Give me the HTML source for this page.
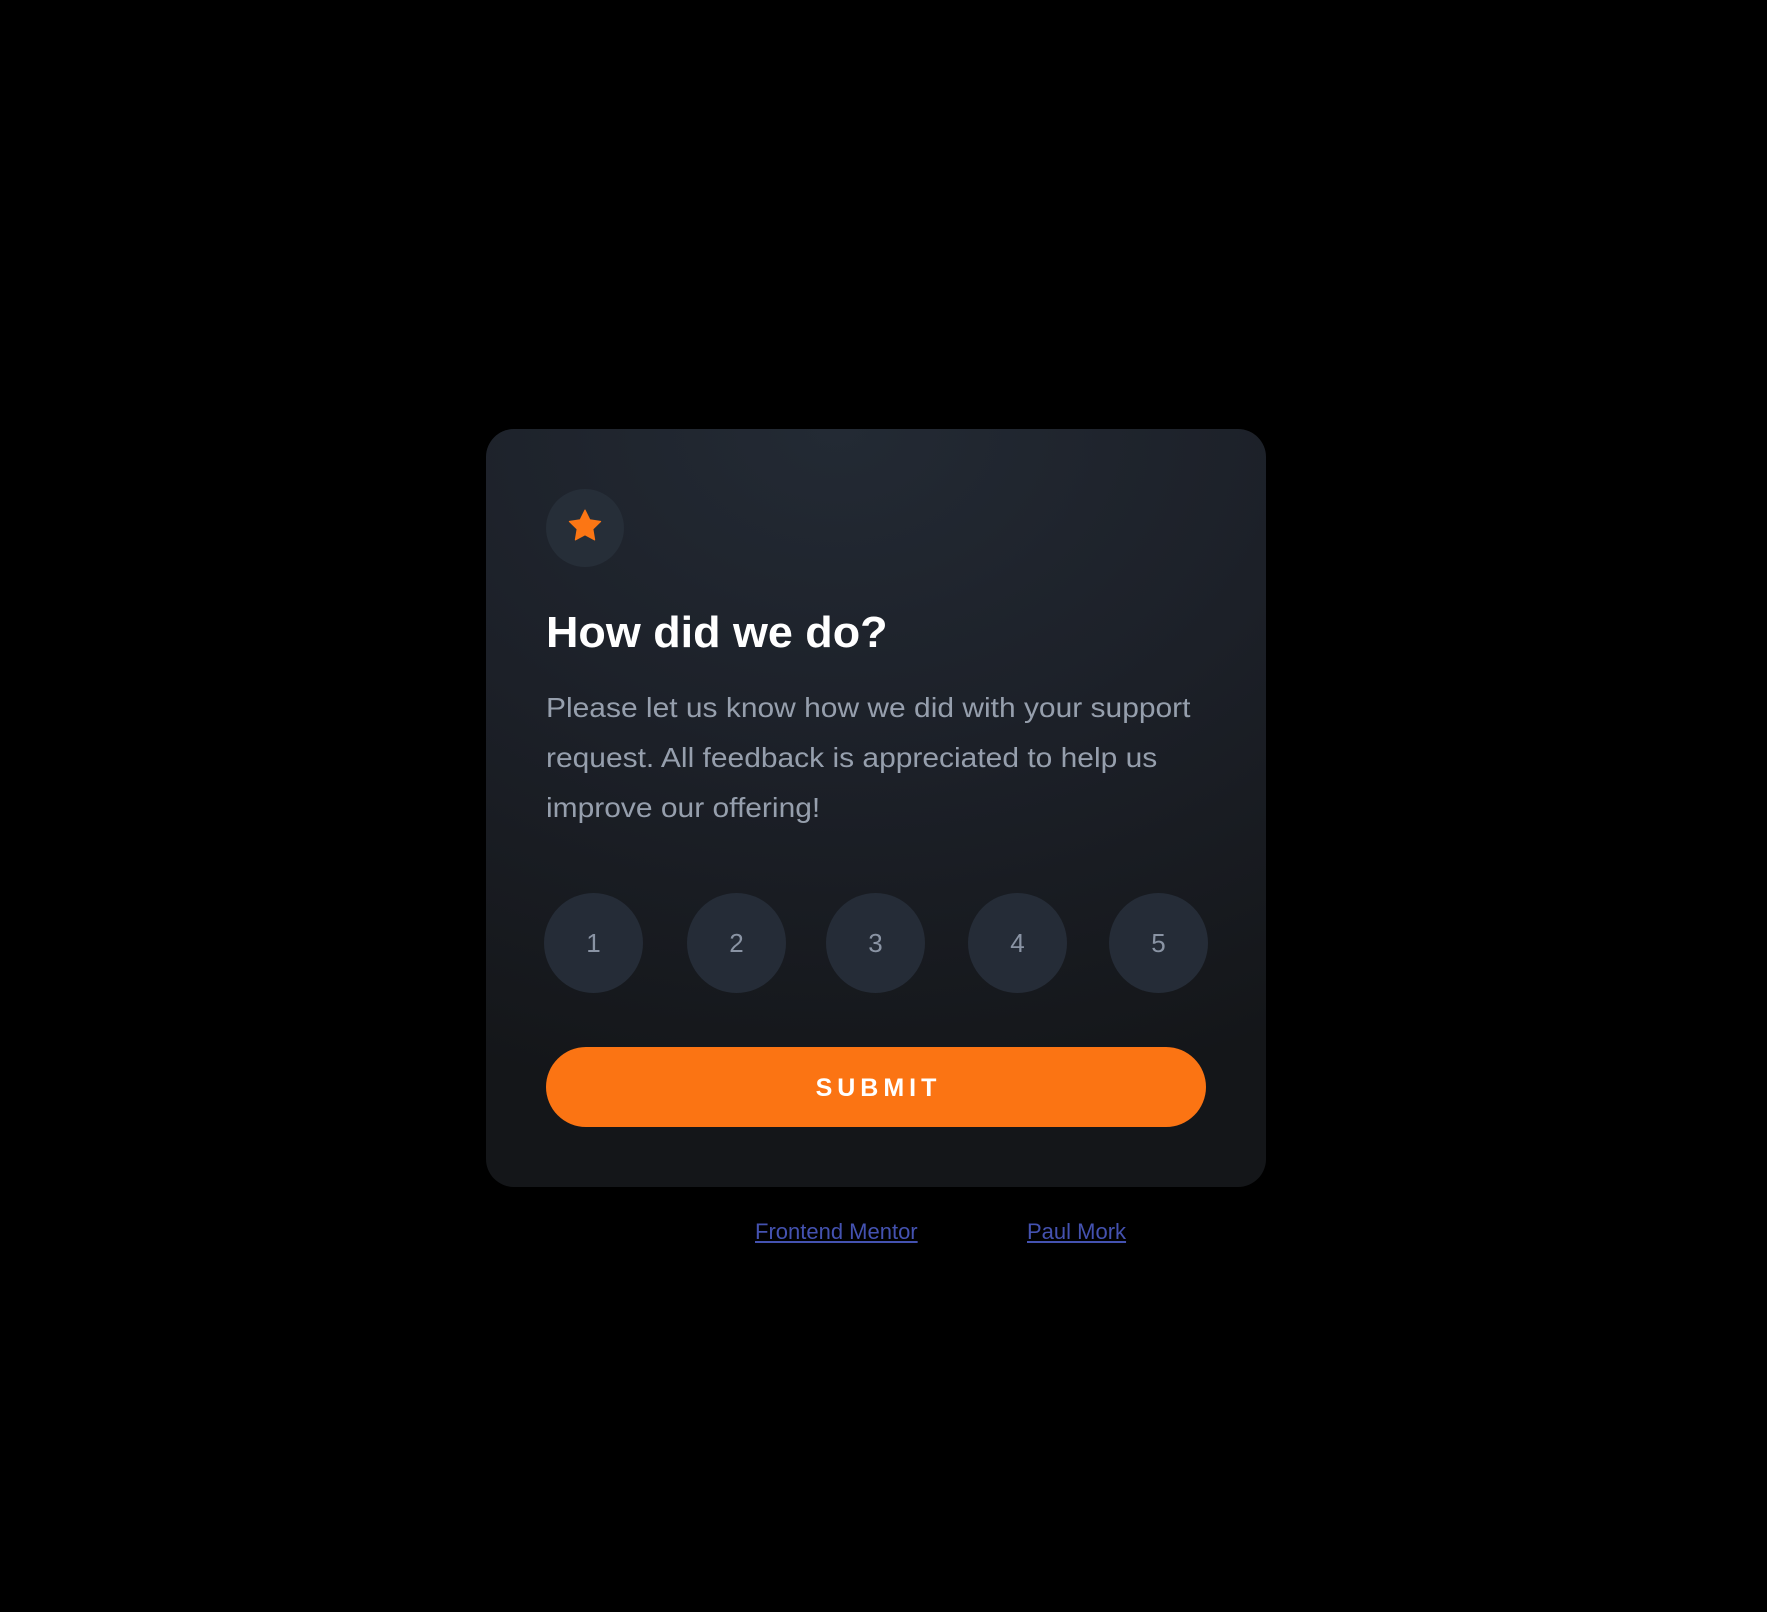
<!DOCTYPE html>
<html><head><meta charset="utf-8"><style>
html,body{margin:0;padding:0;background:#000;width:1767px;height:1612px;overflow:hidden}
body{position:relative;font-family:"Liberation Sans",sans-serif}
.card{position:absolute;left:486px;top:429px;width:780px;height:758px;border-radius:28px;
background:radial-gradient(ellipse 120% 90% at 45% 0%,#232a34 0%,#1c2028 50%,#141619 100%)}
.ic{position:absolute;left:60px;top:60px;width:78px;height:78px;border-radius:50%;background:#262e38}
.ic svg{position:absolute;left:22px;top:20px}
h1{position:absolute;left:60px;top:179px;margin:0;font-size:44px;font-weight:bold;color:#fff;white-space:nowrap;transform:scaleX(1.02);transform-origin:left}
p{position:absolute;left:60px;top:254px;margin:0;font-size:28px;line-height:50px;color:#969fad;white-space:nowrap;transform:scaleX(1.07);transform-origin:left}
.n{position:absolute;top:464px;width:99px;height:100px;border-radius:50%;background:#252c37;color:#8a94a4;font-size:26px;line-height:100px;text-align:center}
.btn{position:absolute;left:60px;top:618px;width:660px;height:80px;border-radius:40px;background:#fb7413;color:#fff;font-size:25px;font-weight:bold;letter-spacing:5px;text-indent:5px;text-align:center;line-height:82px}
a{position:absolute;top:1219px;color:#4452b0;font-size:22px;text-decoration:underline;white-space:nowrap}
</style></head><body>
<div class="card">
<div class="ic"><svg width="34" height="33" viewBox="0 0 17 16"><path fill="#fc7614" d="M8.5 0.3l2.4 4.9 5.4 0.8-3.9 3.8 0.9 5.4-4.8-2.6-4.8 2.6 0.9-5.4-3.9-3.8 5.4-0.8z" stroke="#fc7614" stroke-linejoin="round" stroke-width="0.6"/></svg></div>
<h1>How did we do?</h1>
<p>Please let us know how we did with your support<br>request. All feedback is appreciated to help us<br>improve our offering!</p>
<div class="n" style="left:58px">1</div>
<div class="n" style="left:201px">2</div>
<div class="n" style="left:340px">3</div>
<div class="n" style="left:482px">4</div>
<div class="n" style="left:623px">5</div>
<div class="btn">SUBMIT</div>
</div>
<a style="left:755px">Frontend Mentor</a>
<a style="left:1027px">Paul Mork</a>
</body></html>
